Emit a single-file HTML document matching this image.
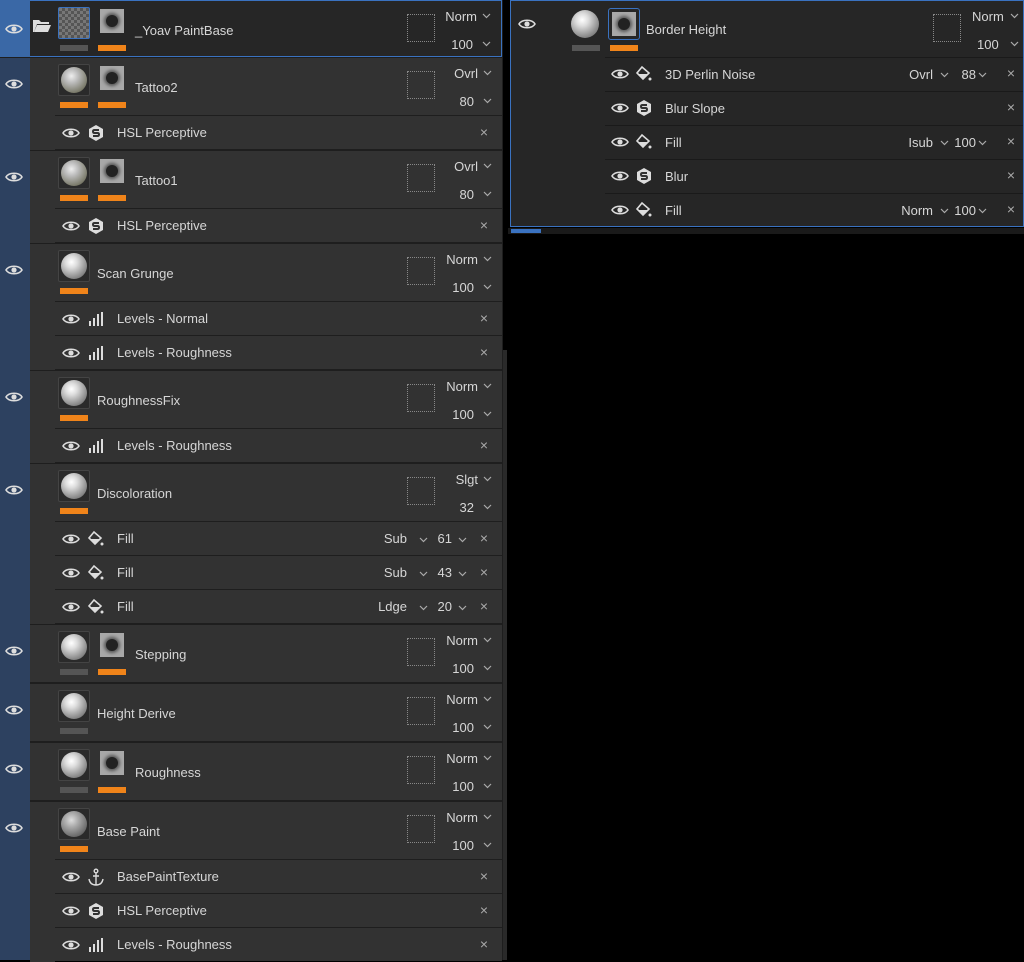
<!DOCTYPE html><html><head><style>
*{margin:0;padding:0;box-sizing:border-box}
body{width:1024px;height:960px;background:#000;position:relative;overflow:hidden;font-family:"Liberation Sans",sans-serif;font-size:13px;color:#d6d6d6}
.a{position:absolute}
#lp{position:absolute;left:0;top:0;width:503px;height:960px;background:#1e1e1e}
.st{position:absolute;left:0;width:30px;background:#2d4160}
.L,.S{position:absolute;background:#323232}
.L{left:30px;width:472px;height:57px}
.S{left:55px;width:447px;height:33px}
.fl{position:absolute;left:30px;width:25px;background:#323232}
.eye{position:absolute;width:18px;height:12px}
.th{position:absolute;left:28px;top:6px;width:32px;height:32px;border:1px solid #444;background:#2a2a2a;border-radius:2px}
.sp{position:absolute;left:2px;top:2px;width:26px;height:26px;border-radius:50%;background:radial-gradient(circle at 40% 35%,#fff 0,#ddd 25%,#888 70%,#555 100%)}
.mk{position:absolute;left:70px;top:8px;width:24px;height:24px;background:#a8a8a8}
.mk:after{content:"";position:absolute;left:6px;top:6px;width:12px;height:12px;border-radius:50%;background:#222;box-shadow:0 0 3px 2px #555}
.bo{position:absolute;top:44px;width:28px;height:6px;background:#f0841a}
.bg{position:absolute;top:44px;width:28px;height:6px;background:#555}
.nm{position:absolute;top:22px}
.ds{position:absolute;left:377px;top:13px;width:28px;height:28px;border:1px dotted #888}
.bl{position:absolute;right:24px;top:8px;text-align:right}
.vl{position:absolute;right:28px;top:36px;text-align:right}
.ch{position:absolute;right:10px;width:9px;height:6px}
.ic{position:absolute;left:32px;top:8px;width:18px;height:18px}
.st2{position:absolute;left:62px;top:9px}
.x{position:absolute;right:14px;top:8px;color:#aaa;font-size:14px}
.sv{position:absolute;top:9px;text-align:right}
</style></head><body>
<svg width="0" height="0" style="position:absolute">
<defs>
<symbol id="eye" viewBox="0 0 18 12"><path d="M1 6C4 1 14 1 17 6C14 11 4 11 1 6Z" fill="none" stroke="#ddd" stroke-width="1.6"/><circle cx="9" cy="6" r="2.6" fill="#ddd"/></symbol>
<symbol id="chv" viewBox="0 0 9 6"><path d="M1 1L4.5 4.5L8 1" fill="none" stroke="#aaa" stroke-width="1.2"/></symbol>
<symbol id="fil" viewBox="0 0 18 18"><path d="M7 2L2 8L8 14L14 8Z" fill="none" stroke="#ddd" stroke-width="1.6"/><path d="M3 9L13 9L8 14Z" fill="#ddd"/><circle cx="15" cy="14" r="1.5" fill="#ddd"/></symbol>
<symbol id="sss" viewBox="0 0 18 18"><path d="M9 1L16 5L16 13L9 17L2 13L2 5Z" fill="#ddd"/><path d="M12 6H7.5Q6 6 6 7.5Q6 9 7.5 9H10.5Q12 9 12 10.5Q12 12 10.5 12H6" fill="none" stroke="#323232" stroke-width="2"/></symbol>
<symbol id="lev" viewBox="0 0 18 18"><rect x="2" y="11" width="2" height="5" fill="#ddd"/><rect x="6" y="8" width="2" height="8" fill="#ddd"/><rect x="10" y="4" width="2" height="12" fill="#ddd"/><rect x="14" y="2" width="2" height="14" fill="#ddd"/></symbol>
<symbol id="anc" viewBox="0 0 18 18"><circle cx="9" cy="3" r="1.8" fill="none" stroke="#ddd" stroke-width="1.4"/><path d="M9 5V17M2 11Q3 17 9 17Q15 17 16 11M6 8H12" fill="none" stroke="#ddd" stroke-width="1.4"/></symbol>
</defs></svg>
<div id="lp">
<div class="st" style="top:0;height:57px;background:#3a68a6"></div>
<div class="st" style="top:58px;height:902px"></div>
<svg class="eye" style="left:5px;top:23px"><use href="#eye"/></svg>
<div class="L" style="top:0;background:#262626;border:1px solid #3a72c0;border-left:none;height:57px">
<svg class="a" style="left:2px;top:17px" width="20" height="16" viewBox="0 0 20 16"><path d="M1 2H7L9 4H17V6H5L2 14H1Z" fill="#ddd"/><path d="M5 7H19L16 14H2Z" fill="#ddd"/></svg>
<div class="th" style="border-color:#3a72c0;background:repeating-conic-gradient(#555 0 25%,#777 0 50%) 0 0/6px 6px"></div>
<div class="mk"></div><div class="bg" style="left:30px"></div><div class="bo" style="left:68px"></div>
<div class="nm" style="left:105px">_Yoav PaintBase</div><div class="ds"></div>
<div class="bl">Norm</div><svg class="ch" style="top:12px"><use href="#chv"/></svg>
<div class="vl">100</div><svg class="ch" style="top:40px"><use href="#chv"/></svg></div>
<div id="rows"></div>
</div>
<div class="a" style="left:503px;top:350px;width:4px;height:610px;background:#2a2a2a"></div>
<div class="a" style="left:510px;top:0;width:514px;height:227px;background:#262626;border:1px solid #3a72c0">
<svg class="eye" style="left:7px;top:17px"><use href="#eye"/></svg>
<div class="sp" style="left:60px;top:9px;width:28px;height:28px"></div>
<div class="a" style="left:61px;top:44px;width:28px;height:6px;background:#555"></div>
<div class="a" style="left:97px;top:7px;width:32px;height:32px;border:1px solid #3a72c0;border-radius:3px"><div class="mk" style="left:3px;top:3px"></div></div>
<div class="a" style="left:99px;top:44px;width:28px;height:6px;background:#f0841a"></div>
<div class="a" style="left:135px;top:21px">Border Height</div>
<div class="a" style="left:422px;top:13px;width:28px;height:28px;border:1px dotted #888"></div>
<div class="a" style="left:461px;top:8px">Norm</div><svg class="ch a" style="left:499px;top:12px"><use href="#chv"/></svg>
<div class="a" style="left:466px;top:36px">100</div><svg class="ch a" style="left:499px;top:40px"><use href="#chv"/></svg>
<div id="rr"></div>
</div>
<div class="a" style="left:508px;top:228px;width:516px;height:6px;background:#1a1a1a"></div>
<div class="a" style="left:511px;top:229px;width:30px;height:4px;background:#3a72c0"></div>
<script>
var R=document.getElementById('rows'),h='';
function eye(t){return '<svg class="eye" style="left:5px;top:'+(t+20)+'px"><use href="#eye"/></svg>'}
function L(t,n,mask,bl,vl,thumbOn,sph){
 h+=eye(t)+'<div class="L" style="top:'+t+'px"><div class="th"><div class="sp" style="'+(sph||'')+'"></div></div>'+(mask?'<div class="mk"></div><div class="bo" style="left:68px"></div>':'')+'<div class="'+(thumbOn?'bo':'bg')+'" style="left:30px"></div><div class="nm" style="left:'+(mask?105:67)+'px">'+n+'</div><div class="ds"></div><div class="bl">'+bl+'</div><svg class="ch" style="top:12px"><use href="#chv"/></svg><div class="vl">'+vl+'</div><svg class="ch" style="top:40px"><use href="#chv"/></svg></div>';}
function S(t,ic,n,b,v){
 h+='<div class="fl" style="top:'+(t-1)+'px;height:35px"></div><div class="S" style="top:'+t+'px"><svg class="eye" style="left:7px;top:11px"><use href="#eye"/></svg><svg class="ic"><use href="#'+ic+'"/></svg><div class="st2">'+n+'</div>'+(b?'<div class="sv" style="right:95px">'+b+'</div><svg class="ch" style="left:364px;top:15px"><use href="#chv"/></svg><div class="sv" style="right:50px">'+v+'</div><svg class="ch" style="left:403px;top:15px"><use href="#chv"/></svg>':'')+'<div class="x">×</div></div>';}
var tat='background:radial-gradient(circle at 40% 35%,#eee 0,#bbb 30%,#776 75%,#443 100%)';
L(58,'Tattoo2',1,'Ovrl','80',1,tat);S(116,'sss','HSL Perceptive');
L(151,'Tattoo1',1,'Ovrl','80',1,tat);S(209,'sss','HSL Perceptive');
L(244,'Scan Grunge',0,'Norm','100',1);S(302,'lev','Levels - Normal');S(336,'lev','Levels - Roughness');
L(371,'RoughnessFix',0,'Norm','100',1);S(429,'lev','Levels - Roughness');
L(464,'Discoloration',0,'Slgt','32',1);S(522,'fil','Fill','Sub','61');S(556,'fil','Fill','Sub','43');S(590,'fil','Fill','Ldge','20');
L(625,'Stepping',1,'Norm','100',0);
L(684,'Height Derive',0,'Norm','100',0);
L(743,'Roughness',1,'Norm','100',0);
L(802,'Base Paint',0,'Norm','100',1,'background:radial-gradient(circle at 40% 35%,#ddd 0,#aaa 30%,#666 75%,#444 100%)');
S(860,'anc','BasePaintTexture');S(894,'sss','HSL Perceptive');S(928,'lev','Levels - Roughness');
R.innerHTML=h;
var q='';
function RS(t,ic,n,b,v){q+='<div class="a" style="left:94px;top:'+t+'px;width:418px;height:33px;border-top:1px solid #1a1a1a"><svg class="eye" style="left:6px;top:10px"><use href="#eye"/></svg><svg class="ic" style="left:30px;top:7px"><use href="#'+ic+'"/></svg><div class="a" style="left:60px;top:9px">'+n+'</div>'+(b?'<div class="a" style="right:90px;top:9px">'+b+'</div><svg class="ch a" style="left:335px;top:14px"><use href="#chv"/></svg><div class="a" style="right:47px;top:9px">'+v+'</div><svg class="ch a" style="left:373px;top:14px"><use href="#chv"/></svg>':'')+'<div class="a" style="right:8px;top:7px;color:#aaa;font-size:14px">×</div></div>';}
RS(56,'fil','3D Perlin Noise','Ovrl','88');RS(90,'sss','Blur Slope');RS(124,'fil','Fill','Isub','100');RS(158,'sss','Blur');RS(192,'fil','Fill','Norm','100');
document.getElementById('rr').innerHTML=q;
</script>
</body></html>
